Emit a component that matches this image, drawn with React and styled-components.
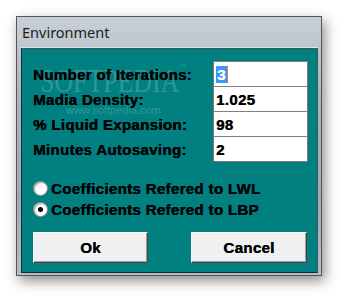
import React from 'react';
import styled, { createGlobalStyle } from 'styled-components';

const Global = createGlobalStyle`
  html, body {
    margin: 0;
    background: #ffffff;
  }
`;

const Stage = styled.div`
  width: 350px;
  height: 304px;
  padding: 16px 0 0 16px;
  box-sizing: border-box;
`;

const Window = styled.div`
  width: 306px;
  height: 260px;
  box-sizing: border-box;
  border: 1px solid #50565c;
  background: linear-gradient(180deg, #c9d0d7 0%, #aab5c0 30%, #9faab6 70%, #b4bdc6 100%);
  box-shadow: 3px 5px 12px rgba(0, 0, 0, 0.45);
  display: flex;
  flex-direction: column;
  padding: 0 3px 2px 4px;
`;

const TitleBar = styled.div`
  height: 30px;
  display: flex;
  align-items: center;
  padding-left: 1px;
  font-family: 'Noto Sans', 'Open Sans', sans-serif;
  font-size: 14.5px;
  color: #1c1c1c;
  border-bottom: 1px solid #dfe4e9;
`;

const Panel = styled.div`
  flex: 1;
  position: relative;
  background: #008080;
  border: 1px solid #3a5a5a;
  border-left-color: #1d2a2a;
  border-bottom-color: #1d2a2a;
  padding: 13px 10px 0 11px;
  font-family: 'Liberation Sans', Arial, sans-serif;
  font-weight: bold;
  font-size: 15px;
  letter-spacing: 0.35px;
  text-shadow: 0.4px 0 0 currentColor;
  color: #000;
  overflow: hidden;
`;

const Form = styled.div`
  position: relative;
  display: grid;
  grid-template-columns: 180px 95px;
  grid-auto-rows: 25px;
`;

const Label = styled.div`
  display: flex;
  align-items: center;
`;

const Field = styled.div`
  background: #fff;
  border: 1px solid #7a7a7a;
  border-top-color: #808080;
  margin-top: -1px;
  display: flex;
  align-items: center;
  padding-left: 2px;
  box-sizing: border-box;
  height: 26px;
`;

const Selected = styled.span`
  background: #3399ff;
  color: #fff;
  padding: 0 1px;
  border-right: 1px solid #e07a20;
`;

const Radios = styled.div`
  margin-top: 19px;
  display: flex;
  flex-direction: column;
  gap: 6px;
`;

const RadioRow = styled.div`
  display: flex;
  align-items: center;
  gap: 3px;
  height: 15px;
`;

const Dot = styled.span`
  width: 15px;
  height: 15px;
  border-radius: 50%;
  background: #fff;
  box-sizing: border-box;
  border: 1px solid #8a8a8a;
  box-shadow: inset 1px 1px 1px #b0b0b0;
  display: flex;
  align-items: center;
  justify-content: center;

  &::after {
    content: '';
    width: 5px;
    height: 5px;
    border-radius: 50%;
    background: ${(p) => (p.checked ? '#000' : 'transparent')};
  }
`;

const Buttons = styled.div`
  margin-top: 15px;
  display: flex;
  gap: 43px;
`;

const Button = styled.button`
  width: ${(p) => p.w}px;
  height: 31px;
  background: #f0f0f0;
  border: 1px solid #fff;
  border-right-color: #444;
  border-bottom-color: #444;
  box-shadow: inset -1px -1px 0 #a0a0a0;
  font-family: 'Liberation Sans', Arial, sans-serif;
  font-weight: bold;
  font-size: 15px;
  letter-spacing: 0.35px;
  text-shadow: 0.4px 0 0 #000;
  color: #000;
  padding: 0;
`;

const Mark = styled.div`
  position: absolute;
  left: 18px;
  top: 13px;
  font-family: 'Liberation Serif', serif;
  font-size: 34px;
  letter-spacing: 0;
  text-shadow: none;
  color: rgba(255, 255, 255, 0.2);
  font-weight: normal;
  pointer-events: none;
  transform: scaleX(0.76);
  transform-origin: left top;
  white-space: nowrap;

  sup {
    font-family: 'Liberation Sans', sans-serif;
    font-size: 9px;
    vertical-align: top;
  }
`;

const MarkUrl = styled.div`
  position: absolute;
  left: 44px;
  top: 55px;
  font-family: 'Liberation Sans', sans-serif;
  font-size: 11px;
  font-weight: normal;
  letter-spacing: 0;
  text-shadow: none;
  color: rgba(255, 255, 255, 0.2);
  pointer-events: none;
`;

const rows = [
  ['Number of Iterations:', '3'],
  ['Madia Density:', '1.025'],
  ['% Liquid Expansion:', '98'],
  ['Minutes Autosaving:', '2'],
];

export default function App() {
  return (
    <Stage>
      <Global />
      <Window>
        <TitleBar>Environment</TitleBar>
        <Panel>
          <Mark>
            SOFTPEDIA<sup>™</sup>
          </Mark>
          <MarkUrl>www.softpedia.com</MarkUrl>
          <Form>
            {rows.map(([label, value], i) => (
              <React.Fragment key={label}>
                <Label>{label}</Label>
                <Field>{i === 0 ? <Selected>{value}</Selected> : value}</Field>
              </React.Fragment>
            ))}
          </Form>
          <Radios>
            <RadioRow>
              <Dot />
              Coefficients Refered to LWL
            </RadioRow>
            <RadioRow>
              <Dot checked />
              Coefficients Refered to LBP
            </RadioRow>
          </Radios>
          <Buttons>
            <Button w={116}>Ok</Button>
            <Button w={117}>Cancel</Button>
          </Buttons>
        </Panel>
      </Window>
    </Stage>
  );
}
